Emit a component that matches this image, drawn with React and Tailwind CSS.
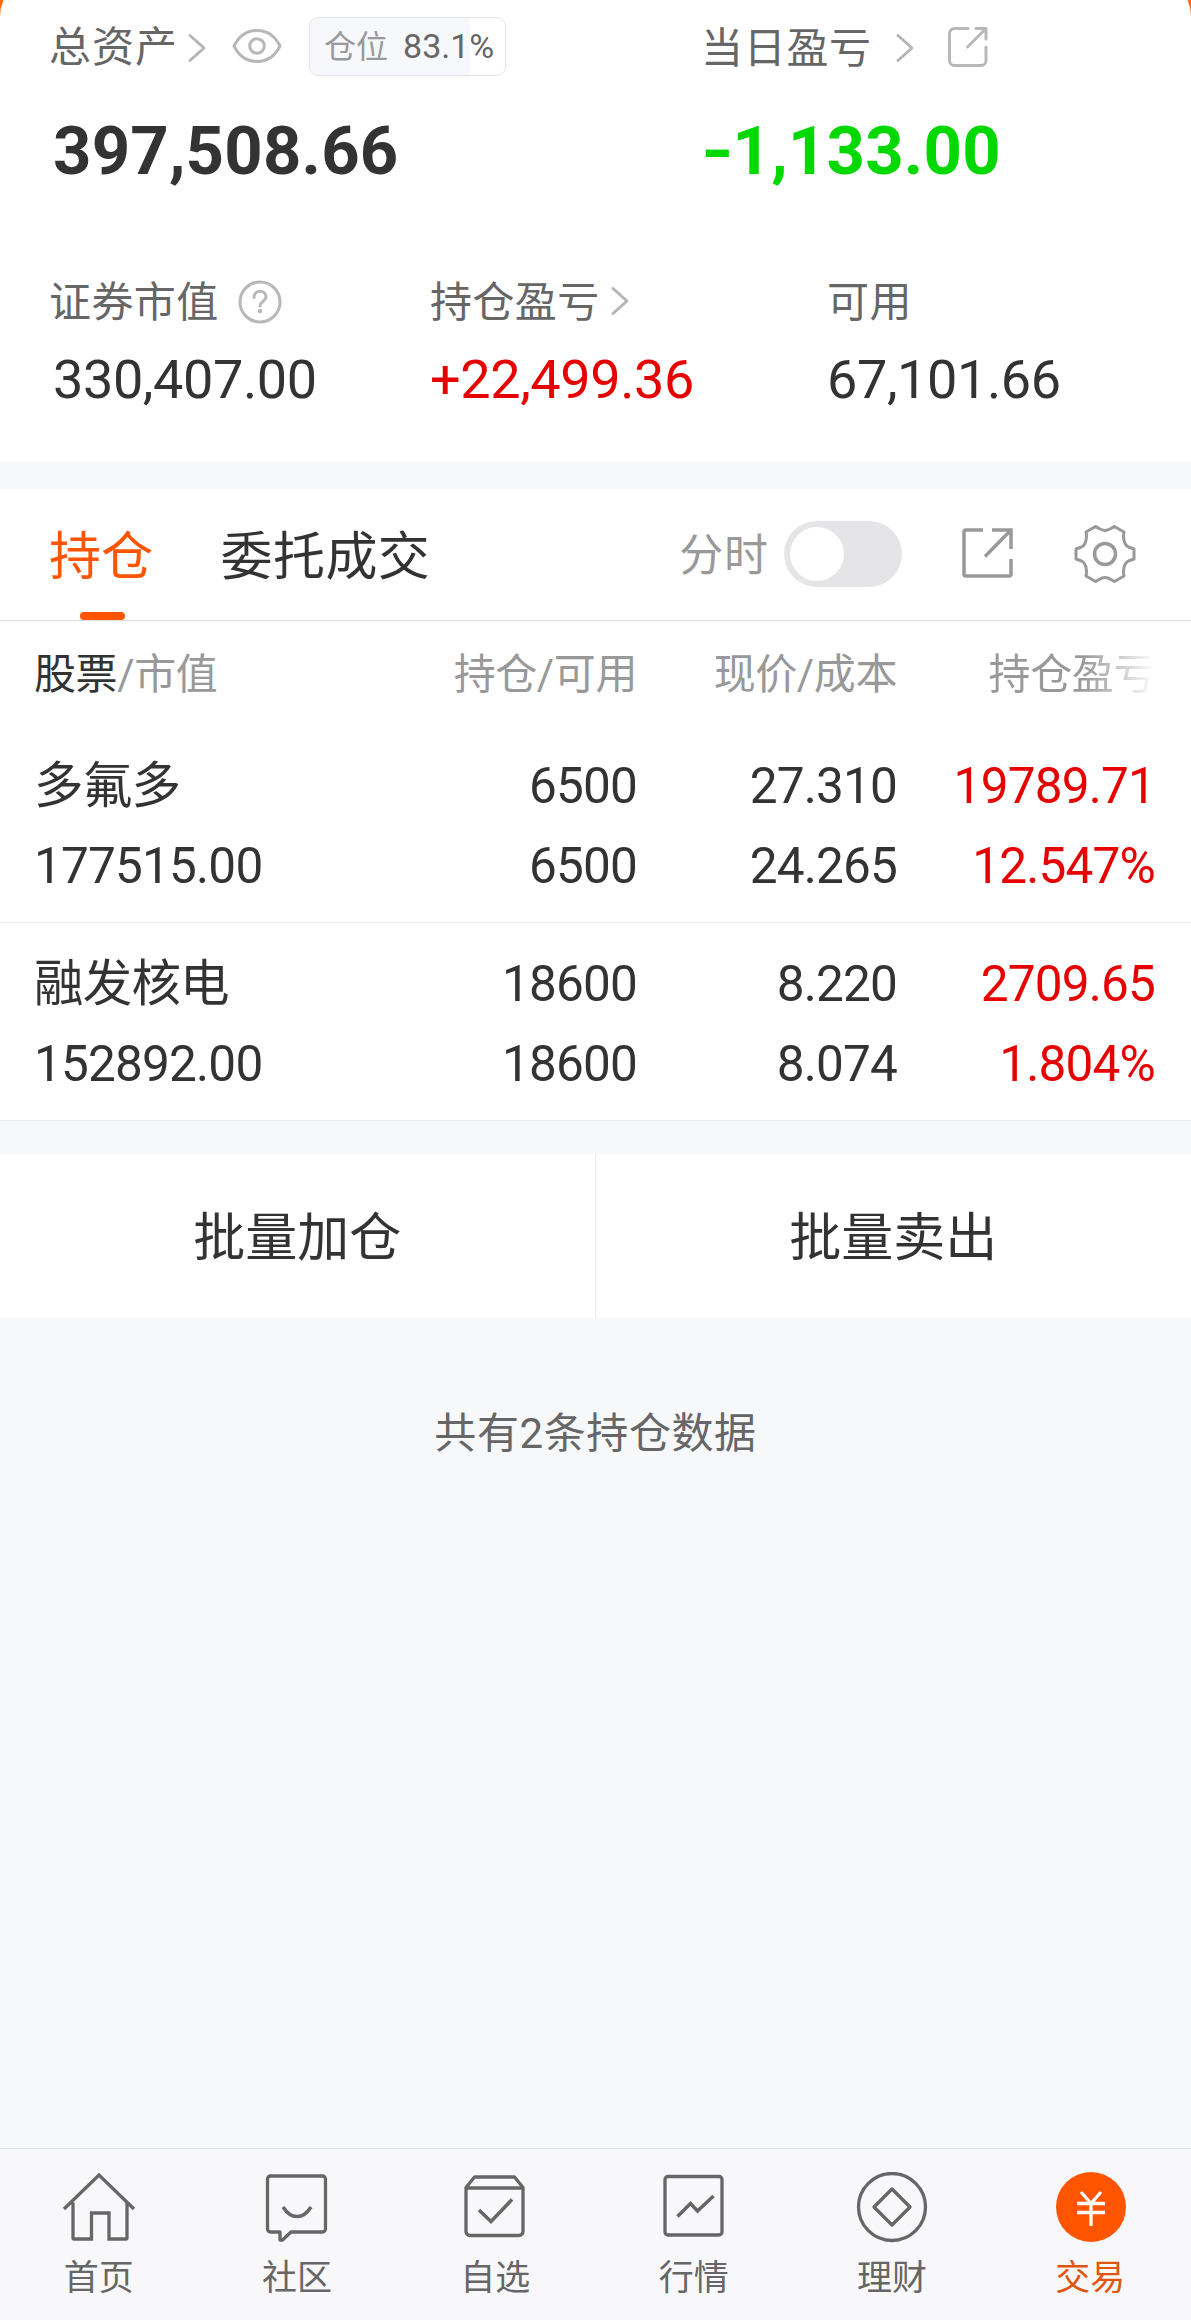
import React from 'react';
import clsx from 'clsx';

const holdings = [
  { name: '多氟多', value: '177515.00', amount: '6500', usable: '6500', price: '27.310', cost: '24.265', profit: '19789.71', rate: '12.547%' },
  { name: '融发核电', value: '152892.00', amount: '18600', usable: '18600', price: '8.220', cost: '8.074', profit: '2709.65', rate: '1.804%' },
];

const Chevron = ({ className }) => (
  <svg className={clsx('h-[30px] w-[20px] shrink-0', className)} viewBox="0 0 20 30" fill="none" stroke="#b5b5b5" strokeWidth="3" strokeLinecap="round" strokeLinejoin="round">
    <path d="M3 2.500l14 12.500L3 27.500" />
  </svg>
);

const EyeIcon = ({ className }) => (
  <svg className={clsx('h-[36px] w-[50px] shrink-0', className)} viewBox="0 0 50 36" fill="none" stroke="#b8b8b8" strokeWidth="3">
    <path d="M2 18C7 8 15 2.500 25 2.500S43 8 48 18C43 28 35 33.500 25 33.500S7 28 2 18z" strokeLinejoin="round" />
    <circle cx="25" cy="18" r="7.300" />
  </svg>
);

const ShareIcon = ({ className }) => (
  <svg className={clsx('h-[42px] w-[42px] shrink-0', className)} viewBox="0 0 42 42" fill="none" stroke="#b8b8b8" strokeWidth="3" strokeLinecap="round" strokeLinejoin="round">
    <path d="M21 2.500H7.500a5 5 0 0 0-5 5v27a5 5 0 0 0 5 5H34a5 5 0 0 0 5-5V21" />
    <path d="M29 2.500h10V13M39 2.500L20.500 21" />
  </svg>
);

const ExportIcon = ({ className }) => (
  <svg className={clsx('h-[52px] w-[52px] shrink-0', className)} viewBox="0 0 52 52" fill="none" stroke="#999" strokeWidth="3.500">
    <path d="M22 3H5a2 2 0 0 0-2 2v42a2 2 0 0 0 2 2h43a2 2 0 0 0 2-2V32" />
    <path d="M31 3h19v19M50 3L24 29.500" />
  </svg>
);

const GearIcon = ({ className }) => (
  <svg className={clsx('h-[60px] w-[62px] shrink-0', className)} viewBox="0 0 62 60" fill="none" stroke="#999" strokeWidth="3" strokeLinejoin="round">
    <path d="M21.500 2.500C25 4 27 6.500 31 6.500S37 4 40.500 2.500L50 8C48.500 13 50 21 54.500 23L60 25V35L54.500 37C50 39 48.500 47 50 52L40.500 57.500C37 56 35 53.500 31 53.500S25 56 21.500 57.500L12 52C13.500 47 12 39 7.500 37L2 35V25L7.500 23C12 21 13.500 13 12 8Z" />
    <circle cx="31" cy="30" r="10.500" strokeWidth="3.500" />
  </svg>
);

const HelpIcon = ({ className }) => (
  <svg className={clsx('h-[44px] w-[44px] shrink-0', className)} viewBox="0 0 44 44" fill="none" stroke="#b8b8b8" strokeWidth="3" strokeLinecap="round">
    <circle cx="22" cy="22" r="20" />
    <path d="M16 17.500c0-4 2.700-6.200 6-6.200s6 2.200 6 5.500c0 4.200-6 4.700-6 9.200" />
    <circle cx="22" cy="31" r="1.300" fill="#b8b8b8" strokeWidth="2" />
  </svg>
);

const navItems = [
  {
    label: '首页',
    icon: <path d="M2 37L37 3 72 37M11 30.500v35.500a1 1 0 0 0 1 1h17.500V41h17.500v26h17a1 1 0 0 0 1-1V30.500" />,
  },
  {
    label: '社区',
    icon: (
      <>
        <path d="M10.500 4h52a3 3 0 0 1 3 3v50a3 3 0 0 1-3 3H31l-8.500 8H20v-8h-9.500a3 3 0 0 1-3-3V7a3 3 0 0 1 3-3z" strokeLinejoin="round" />
        <path d="M23 35q6 9.500 14 9.500T51 35" strokeWidth="3.500" />
      </>
    ),
  },
  {
    label: '自选',
    icon: (
      <>
        <path d="M8 15.500v44a4 4 0 0 0 4 4h49a4 4 0 0 0 4-4v-44L56.500 5h-40zM8 16h57" strokeLinejoin="round" />
        <path d="M21 38l12 11.500L54 27.500" strokeWidth="3.500" />
      </>
    ),
  },
  {
    label: '行情',
    icon: (
      <>
        <rect x="8" y="4.500" width="57" height="58.500" rx="3" />
        <path d="M20.500 44.500l13-13 7 7.500 16-15" strokeWidth="3.500" />
      </>
    ),
  },
  {
    label: '理财',
    icon: (
      <>
        <circle cx="37" cy="35" r="33.500" />
        <path d="M37 17l18 18L37 53 19 35z" strokeLinejoin="round" />
      </>
    ),
  },
  {
    label: '交易',
    active: true,
    icon: (
      <>
        <circle cx="38" cy="35" r="35" fill="#ff5500" stroke="none" />
        <path d="M28 20l10 11.500L48 20M38 31.500V54M24 31.500h28M24 40.500h28" stroke="#fff" />
      </>
    ),
  },
];

const Stat = ({ label, value, color = 'text-[#333]', className }) => (
  <div className={className}>
    <div className="flex h-[60px] items-center text-[42px] tracking-[0.4px] text-[#666]">{label}</div>
    <div className={clsx('mt-[18px] h-[60px] text-[54px] leading-[60px] tracking-[-0.4px] whitespace-nowrap', color)}>{value}</div>
  </div>
);

const Summary = () => (
  <div className="bg-[#ff6a10] overflow-hidden">
    <div className="-mt-[26px] h-[488px] rounded-t-[43px] bg-white pt-[26px]">
      <div className="flex">
        <div className="w-[701px] pl-[49px]">
          <div className="flex h-[92px] items-center">
            <span className="pt-[3px] text-[42px] tracking-[1px] text-[#666]">总资产</span>
            <Chevron className="ml-[9px] mt-[4px]" />
            <EyeIcon className="ml-[25px]" />
            <div className="ml-[27px] flex h-[59px] w-[197px] items-center overflow-hidden rounded-[9px] border border-[#e5e5e7] bg-linear-to-r from-[#f7f8fb] from-[82%] to-white to-[82%] pl-[14px]">
              <span className="pt-[1px] text-[32px] text-[#999]">仓位</span>
              <span className="ml-[15px] text-[34px] text-[#666]">83.1%</span>
            </div>
          </div>
          <div className="mt-[22px] pl-[4px] text-[67px] leading-[74px] font-bold tracking-[0.2px] text-[#333]">397,508.66</div>
        </div>
        <div>
          <div className="flex h-[92px] items-center">
            <span className="pt-[4px] text-[42px] tracking-[0.7px] text-[#666]">当日盈亏</span>
            <Chevron className="ml-[23px] mt-[3px]" />
            <ShareIcon className="ml-[32px] mt-[2px]" />
          </div>
          <div className="mt-[22px] text-[67px] leading-[74px] font-bold tracking-[0.2px] text-[#00d800]">
            <span className="mr-[5px] inline-block origin-left scale-x-125">-</span>1,133.00
          </div>
        </div>
      </div>
      <div className="mt-[84px] flex pl-[49px]">
        <Stat
          className="w-[381px]"
          label={<>证券市值<HelpIcon className="ml-[19px]" /></>}
          value={<span className="pl-[4px]">330,407.00</span>}
        />
        <Stat
          className="w-[397px]"
          label={<>持仓盈亏<Chevron className="mb-[2px] ml-[10px]" /></>}
          value="+22,499.36"
          color="text-[#e60000]"
        />
        <Stat label="可用" value="67,101.66" />
      </div>
    </div>
  </div>
);

const Tabs = () => (
  <div className="flex h-[132px] items-center border-b border-[#dedede] bg-white pl-[49px]">
    <div className="relative flex h-full items-center pt-[6px] text-[52px] tracking-[0.3px] text-[#ff5500]">
      持仓
      <span className="absolute bottom-0 left-[31px] h-[8px] w-[45px] rounded-[4px] bg-[#ff5500]" />
    </div>
    <div className="ml-[67px] pt-[6px] text-[52px] tracking-[0.4px] text-[#333]">委托成交</div>
    <div className="ml-[249px] pt-[2px] text-[44px] tracking-[0.7px] text-[#999]">分时</div>
    <div className="mb-[2px] ml-[15px] flex h-[66px] w-[118px] shrink-0 items-center rounded-full bg-[#e5e5e7] pl-[6px]">
      <div className="h-[54px] w-[54px] rounded-full bg-white" />
    </div>
    <ExportIcon className="mb-[3px] ml-[59px]" />
    <GearIcon className="mb-[2px] ml-[61px]" />
  </div>
);

const GRID = 'grid grid-cols-[338px_265px_260px_258px] pl-[34px]';

const HoldingRow = ({ item }) => (
  <div className={clsx(GRID, 'h-[198px] border-b border-[#ededed] pt-[21px] text-right text-[49.500px] leading-[80px] tracking-[-0.8px] text-[#333]')}>
    <div className="text-left">
      <div>{item.name}</div>
      <div>{item.value}</div>
    </div>
    <div>
      <div>{item.amount}</div>
      <div>{item.usable}</div>
    </div>
    <div>
      <div>{item.price}</div>
      <div>{item.cost}</div>
    </div>
    <div className="text-[#e60000]">
      <div>{item.profit}</div>
      <div>{item.rate}</div>
    </div>
  </div>
);

const HoldingTable = () => (
  <div className="bg-white">
    <div className={clsx(GRID, 'h-[104px] pt-[2px] text-right text-[42px] leading-[104px] tracking-[-0.4px] text-[#999]')}>
      <div className="text-left"><span className="text-[#333]">股票</span>/市值</div>
      <div>持仓/可用</div>
      <div>现价/成本</div>
      <div className="bg-linear-to-r from-[#999] from-[72%] to-white bg-clip-text text-transparent">持仓盈亏</div>
    </div>
    {holdings.map(item => (
      <HoldingRow key={item.name} item={item} />
    ))}
  </div>
);

const BottomNav = () => (
  <div className="grid h-[172px] grid-cols-6 border-t border-[#e2e3e5] bg-[#f8f8fa] pr-[1px]">
    {navItems.map(item => (
      <div key={item.label} className="flex flex-col items-center pr-[1px] pt-[23px]">
        <svg className="h-[72px] w-[74px]" viewBox="0 0 74 72" fill="none" stroke="#666" strokeWidth="3.300">
          {item.icon}
        </svg>
        <span className={clsx('mt-[10px] text-[35px] leading-[50px]', item.active ? 'text-[#e25510]' : 'text-[#666]')}>{item.label}</span>
      </div>
    ))}
  </div>
);

const App = () => {
  return (
    <div className="flex h-[2320px] w-[1191px] flex-col overflow-hidden bg-[#f7f8fa] font-[Roboto,'Noto_Sans_CJK_SC',sans-serif]">
      <Summary />
      <div className="h-[27px] bg-[#f7f8fb]" />
      <Tabs />
      <HoldingTable />
      <div className="mt-[33px] grid h-[164px] grid-cols-2 overflow-hidden bg-white text-center text-[52px] leading-[170px] text-[#333]">
        <div className="border-r border-[#ebebed]">批量加仓</div>
        <div>批量卖出</div>
      </div>
      <div className="mt-[86px] text-center text-[42px] leading-[60px] tracking-[0.6px] text-[#666]">共有2条持仓数据</div>
      <div className="flex-1" />
      <BottomNav />
    </div>
  );
};

export default App;
